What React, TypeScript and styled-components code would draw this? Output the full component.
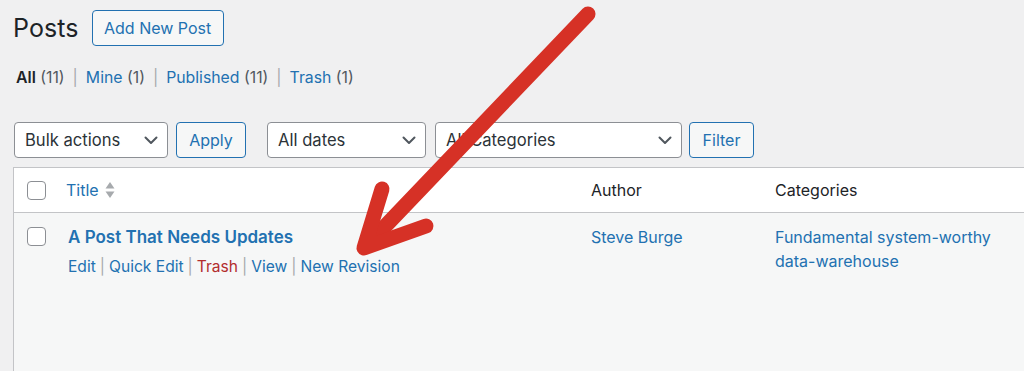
import React from "react";
import styled, { createGlobalStyle } from "styled-components";

const Global = createGlobalStyle`
  html, body { margin: 0; padding: 0; }
  body {
    background: #f0f0f1;
    font-family: Inter, "Noto Sans", "Liberation Sans", sans-serif;
    color: #3c434a;
    overflow: hidden;
    width: 1024px;
    height: 371px;
  }
  #root { position: relative; width: 1024px; height: 371px; overflow: hidden; }
`;

const Wrap = styled.div`
  padding: 10px 0 0 13px;
  display: flex;
  flex-direction: column;
`;

const Header = styled.div`
  display: flex;
  align-items: center;
  gap: 13px;
  height: 36px;
`;

const Title = styled.h1`
  margin: 0;
  font-size: 25px;
  font-weight: 400;
  color: #1d2327;
  letter-spacing: 0.1px;
`;

const OutlineButton = styled.button<{ $w: number }>`
  box-sizing: border-box;
  width: ${(p) => p.$w}px;
  height: 36px;
  border: 1px solid #2271b1;
  border-radius: 4px;
  background: #f6f7f7;
  color: #2271b1;
  font-family: inherit;
  font-size: 16px;
  padding: 0;
  display: flex;
  align-items: center;
  justify-content: center;
`;

const SubNav = styled.ul`
  list-style: none;
  margin: 22px 0 0 3px;
  padding: 0;
  display: flex;
  font-size: 15.8px;
  line-height: 20px;
`;

const SubItem = styled.li<{ $current?: boolean }>`
  color: #50575e;
  white-space: pre;
  a {
    color: ${(p) => (p.$current ? "#1d2327" : "#2271b1")};
    font-weight: ${(p) => (p.$current ? 600 : 400)};
    text-decoration: none;
  }
`;

const Sep = styled.span`
  color: #a7aaad;
  margin: 0 8px;
`;

const TableNav = styled.div`
  display: flex;
  align-items: center;
  margin-top: 34px;
  margin-left: 1px;
  height: 36px;
`;

const SelectBox = styled.div<{ $w: number; $ml?: number }>`
  box-sizing: border-box;
  width: ${(p) => p.$w}px;
  margin-left: ${(p) => p.$ml ?? 0}px;
  height: 36px;
  border: 1px solid #8c8f94;
  border-radius: 4px;
  background: #fff;
  display: flex;
  align-items: center;
  justify-content: space-between;
  padding: 0 9px 0 10px;
  font-size: 16.6px;
  color: #2c3338;
`;

const NavButton = styled(OutlineButton)<{ $ml: number }>`
  margin-left: ${(p) => p.$ml}px;
`;

const Table = styled.div`
  margin-top: 9px;
  width: 1100px;
  border: 1px solid #c3c4c7;
  border-right: none;
  background: #fff;
`;

const Row = styled.div<{ $head?: boolean }>`
  display: grid;
  grid-template-columns: 42px 525px 184px 240px 1fr;
  background: ${(p) => (p.$head ? "#fff" : "#f6f7f7")};
  border-bottom: ${(p) => (p.$head ? "1px solid #c3c4c7" : "none")};
  height: ${(p) => (p.$head ? "44px" : "170px")};
  align-items: ${(p) => (p.$head ? "center" : "start")};
`;

const CbCell = styled.div<{ $head?: boolean }>`
  padding-left: 13px;
  padding-top: ${(p) => (p.$head ? 0 : 14)}px;
  display: flex;
  align-items: center;
`;

const Checkbox = styled.span`
  box-sizing: border-box;
  width: 19px;
  height: 19px;
  border: 1px solid #8c8f94;
  border-radius: 4px;
  background: #fff;
  display: block;
`;

const HeadCell = styled.div<{ $link?: boolean }>`
  padding-left: 10px;
  font-size: 16px;
  color: ${(p) => (p.$link ? "#2271b1" : "#1d2327")};
  display: flex;
  align-items: center;
  gap: 6px;
`;

const Cell = styled.div<{ $pl?: number }>`
  padding: 12px 10px 0 ${(p) => p.$pl ?? 10}px;
  font-size: 16px;
  line-height: 24px;
  color: #2271b1;
`;

const PostTitle = styled.div`
  font-weight: 600;
  font-size: 17px;
  color: #2271b1;
  line-height: 24px;
`;

const RowActions = styled.div`
  margin-top: 8px;
  font-size: 15.6px;
  line-height: 20px;
  color: #2271b1;
  white-space: pre;
`;

const Action = styled.span<{ $danger?: boolean }>`
  color: ${(p) => (p.$danger ? "#b32d2e" : "#2271b1")};
`;

const ActSep = styled.span`
  color: #a7aaad;
  margin: 0 4px;
`;

const Arrow = styled.svg`
  position: absolute;
  left: 0;
  top: 0;
  pointer-events: none;
`;

const Chevron = () => (
  <svg width="14" height="9" viewBox="0 0 14 9">
    <path d="M1.5 1.5 L7 7 L12.5 1.5" fill="none" stroke="#50575e" strokeWidth="2" strokeLinecap="round" strokeLinejoin="round" />
  </svg>
);

const SortIcon = () => (
  <svg width="10" height="18" viewBox="0 0 10 18">
    <path d="M5 1 L9.5 7.5 H0.5 Z" fill="#a7aaad" />
    <path d="M5 17 L9.5 10.5 H0.5 Z" fill="#a7aaad" />
  </svg>
);

export default function App() {
  return (
    <>
      <Global />
      <Wrap>
        <Header>
          <Title>Posts</Title>
          <OutlineButton $w={132}>Add New Post</OutlineButton>
        </Header>
        <SubNav>
          <SubItem $current><a>All</a> (11)<Sep>|</Sep></SubItem>
          <SubItem><a>Mine</a> (1)<Sep>|</Sep></SubItem>
          <SubItem><a>Published</a> (11)<Sep>|</Sep></SubItem>
          <SubItem><a>Trash</a> (1)</SubItem>
        </SubNav>
        <TableNav>
          <SelectBox $w={154}>Bulk actions<Chevron /></SelectBox>
          <NavButton $w={70} $ml={8}>Apply</NavButton>
          <SelectBox $w={159} $ml={21}>All dates<Chevron /></SelectBox>
          <SelectBox $w={247} $ml={9}>All Categories<Chevron /></SelectBox>
          <NavButton $w={65} $ml={7}>Filter</NavButton>
        </TableNav>
        <Table>
          <Row $head>
            <CbCell $head><Checkbox /></CbCell>
            <HeadCell $link>Title<SortIcon /></HeadCell>
            <HeadCell>Author</HeadCell>
            <HeadCell>Categories</HeadCell>
            <HeadCell />
          </Row>
          <Row>
            <CbCell><Checkbox /></CbCell>
            <Cell $pl={12}>
              <PostTitle>A Post That Needs Updates</PostTitle>
              <RowActions>
                <Action>Edit</Action><ActSep>|</ActSep>
                <Action>Quick Edit</Action><ActSep>|</ActSep>
                <Action $danger>Trash</Action><ActSep>|</ActSep>
                <Action>View</Action><ActSep>|</ActSep>
                <Action>New Revision</Action>
              </RowActions>
            </Cell>
            <Cell>Steve Burge</Cell>
            <Cell>Fundamental system-worthy data-warehouse</Cell>
            <Cell />
          </Row>
        </Table>
      </Wrap>
      <Arrow width="1024" height="371" viewBox="0 0 1024 371">
        <g stroke="#d63126" strokeWidth="15" strokeLinecap="round" strokeLinejoin="round" fill="none">
          <line x1="588" y1="14" x2="372" y2="240" />
          <polyline points="382,189 364,248 426,226" />
        </g>
      </Arrow>
    </>
  );
}
